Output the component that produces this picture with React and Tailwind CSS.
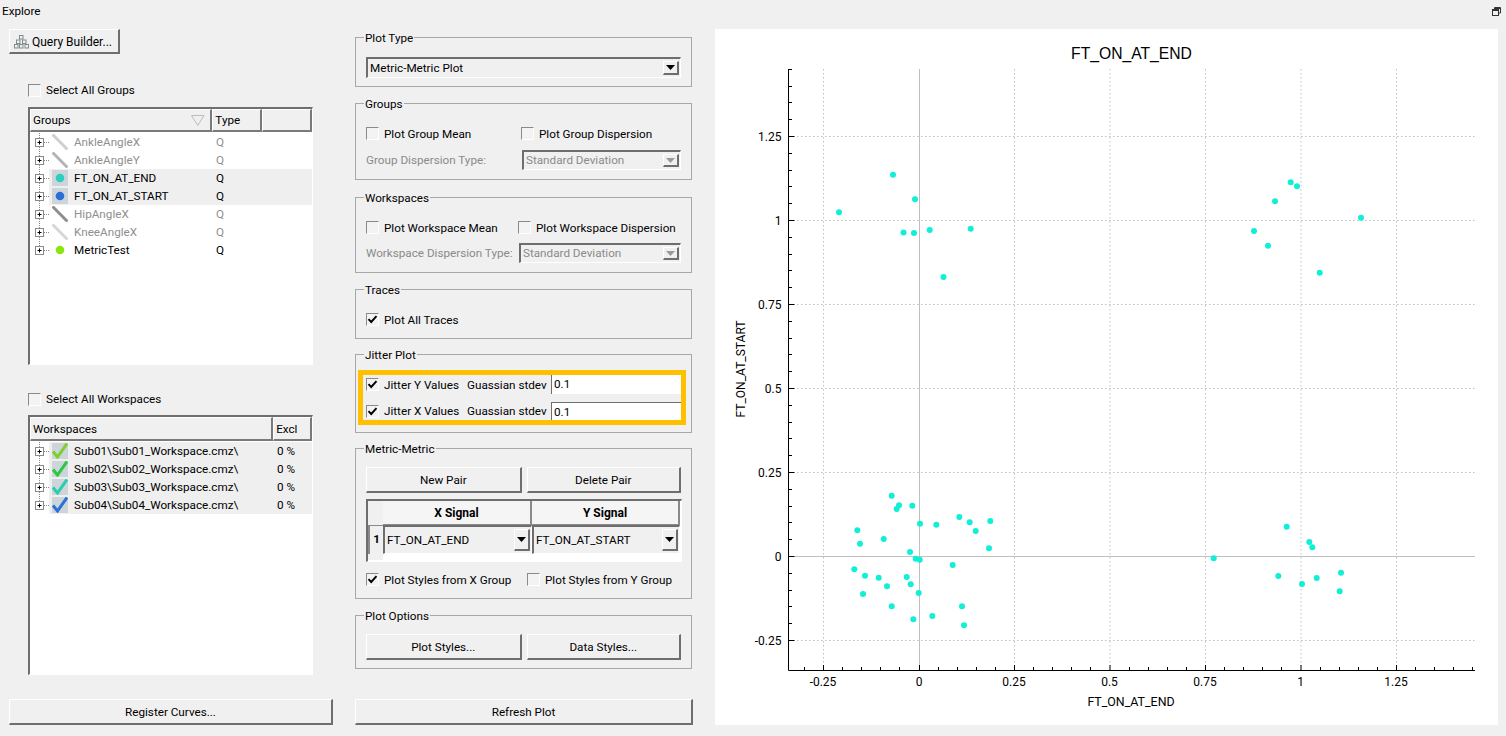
const raised = "border-t border-l border-r-2 border-b-2 border-t-white border-l-white border-r-[#6e6e6e] border-b-[#6e6e6e] bg-[#f0f0f0]";
const sunken = "border-t-2 border-l-2 border-r border-b border-t-[#6e6e6e] border-l-[#6e6e6e] border-r-white border-b-white";

function Check({ checked }) {
  return (
    <span className="w-[13px] h-[13px] shrink-0 border-t border-l border-r border-b border-t-[#8a8a8a] border-l-[#8a8a8a] border-r-white border-b-white bg-[#f3f3f3] flex items-center justify-center">
      {checked && (
        <svg width="11" height="11" viewBox="0 0 11 11">
          <path d="M1.5 5.2 L4.2 8 L9.5 2.2" fill="none" stroke="#000" strokeWidth="1.9" />
        </svg>
      )}
    </span>
  );
}

function CheckLabel({ checked, label, className = "" }) {
  return (
    <div className={"flex items-center gap-[5px] " + className}>
      <Check checked={checked} />
      <span className="whitespace-nowrap pt-[2px]">{label}</span>
    </div>
  );
}

function Btn({ children, className = "" }) {
  return (
    <div className={raised + " flex items-center justify-center pt-[2px] " + className}>{children}</div>
  );
}

function Arrow({ disabled }) {
  return (
    <svg width="9" height="5" viewBox="0 0 9 5">
      <path d="M0 0 H9 L4.5 5 Z" fill={disabled ? "#9a9a9a" : "#000"} />
    </svg>
  );
}

function Combo({ text, disabled, className = "" }) {
  return (
    <div className={sunken + " flex items-center justify-between pl-[2px] py-[2px] pr-[1px] bg-[#f0f0f0] " + (disabled ? "text-[#8a8a8a] " : "") + className}>
      <span className="whitespace-nowrap pt-[1px]">{text}</span>
      <div className={raised + " w-[16px] h-full flex items-center justify-center"}>
        <Arrow disabled={disabled} />
      </div>
    </div>
  );
}

function GroupBox({ title, className = "", children }) {
  return (
    <div className={"relative border border-[#a8a8a8] px-[10px] " + className}>
      <span className="absolute left-[8px] top-[-9px] h-[18px] leading-[18px] bg-[#f0f0f0] px-[1px]">{title}</span>
      {children}
    </div>
  );
}

function Expander({ last }) {
  return (
    <svg width="19" height="18" viewBox="0 0 19 18" className="shrink-0">
      <path d={last ? "M9.5 0 V9" : "M9.5 0 V18"} stroke="#8a8a8a" strokeDasharray="1 1" fill="none" />
      <path d="M14 9.5 H19" stroke="#8a8a8a" strokeDasharray="1 1" fill="none" />
      <rect x="5.5" y="5.5" width="8" height="8" fill="#fff" stroke="#8a8a8a" />
      <path d="M7.5 9.5 H11.5 M9.5 7.5 V11.5" stroke="#000" fill="none" />
    </svg>
  );
}

function Swatch({ kind, color }) {
  if (kind === "line") {
    return (
      <svg width="16" height="16" viewBox="0 0 16 16" className="shrink-0">
        <path d="M0.5 0.5 L15.5 15.5" stroke={color} strokeWidth="3" fill="none" />
      </svg>
    );
  }
  if (kind === "dot") {
    return (
      <svg width="16" height="16" viewBox="0 0 16 16" className="shrink-0">
        <rect width="16" height="16" fill="#cdd5da" />
        <circle cx="8" cy="8" r="4.3" fill={color} />
      </svg>
    );
  }
  if (kind === "plain") {
    return (
      <svg width="16" height="16" viewBox="0 0 16 16" className="shrink-0">
        <circle cx="8" cy="8" r="4.3" fill={color} />
      </svg>
    );
  }
  return (
    <svg width="16" height="16" viewBox="0 0 16 16" className="shrink-0">
      <rect width="16" height="16" fill="#cdd5da" />
      <path d="M1 8.5 L5.5 14 L15 0.5" stroke={color} strokeWidth="3" fill="none" />
    </svg>
  );
}

const groups = [
  { n: "AnkleAngleX", kind: "line", c: "#cfcfcf", dim: true },
  { n: "AnkleAngleY", kind: "line", c: "#b4b4b4", dim: true },
  { n: "FT_ON_AT_END", kind: "dot", c: "#2acfc0", hi: true },
  { n: "FT_ON_AT_START", kind: "dot", c: "#2b6fd6", hi: true },
  { n: "HipAngleX", kind: "line", c: "#8e8e8e", dim: true },
  { n: "KneeAngleX", kind: "line", c: "#d6d6d6", dim: true },
  { n: "MetricTest", kind: "plain", c: "#8be60f" },
];

const workspaces = [
  { n: "Sub01\\Sub01_Workspace.cmz\\", c: "#7fd02f" },
  { n: "Sub02\\Sub02_Workspace.cmz\\", c: "#2bc845" },
  { n: "Sub03\\Sub03_Workspace.cmz\\", c: "#2bcdb0" },
  { n: "Sub04\\Sub04_Workspace.cmz\\", c: "#2b72d6" },
];

function HeaderCell({ children, className = "" }) {
  return (
    <div className={"h-full border-t border-l border-r-2 border-b-2 border-t-white border-l-white border-r-[#7a7a7a] border-b-[#7a7a7a] flex items-center relative pl-[2px] pt-[2px] " + className}>
      {children}
    </div>
  );
}

function GroupsTable() {
  return (
    <div className={sunken + " ml-[19px] w-[285px] h-[258px] bg-white"}>
      <div className="h-[23px] flex bg-[#f0f0f0]">
        <HeaderCell className="w-[183px]">
          Groups
          <svg width="14" height="11" viewBox="0 0 14 11" className="absolute right-[5px] top-[5px]">
            <path d="M0.5 0.5 H13 L6.8 10.5 Z" fill="none" stroke="#bdbdbd" />
          </svg>
        </HeaderCell>
        <HeaderCell className="w-[50px]">Type</HeaderCell>
        <HeaderCell className="w-[50px]" />
      </div>
      <div className="pt-[1px]">
        {groups.map((g, i) => (
          <div key={g.n} className="h-[18px] flex">
            <div className="w-[19px] shrink-0"><Expander last={i === groups.length - 1} /></div>
            <div className={"flex-1 flex items-center pl-[3px] " + (g.hi ? "bg-[#efefef] " : "") + (g.dim ? "text-[#8f8f8f]" : "text-black")}>
              <Swatch kind={g.kind} color={g.c} />
              <span className="ml-[6px] w-[142px] whitespace-nowrap pt-[1px]">{g.n}</span>
              <span className="pt-[1px]">Q</span>
            </div>
          </div>
        ))}
      </div>
    </div>
  );
}

function WorkspacesTable() {
  return (
    <div className={sunken + " ml-[19px] w-[285px] h-[260px] bg-white"}>
      <div className="h-[24px] flex bg-[#f0f0f0]">
        <HeaderCell className="w-[244px]">Workspaces</HeaderCell>
        <HeaderCell className="w-[39px]">Excl</HeaderCell>
      </div>
      <div className="pt-[1px]">
        {workspaces.map((w, i) => (
          <div key={w.n} className="h-[18px] flex">
            <div className="w-[19px] shrink-0"><Expander last={i === workspaces.length - 1} /></div>
            <div className="flex-1 flex items-center pl-[3px] bg-[#efefef]">
              <Swatch kind="check" color={w.c} />
              <span className="ml-[6px] w-[203px] whitespace-nowrap pt-[1px]">{w.n}</span>
              <span className="pt-[1px]">0 %</span>
            </div>
          </div>
        ))}
      </div>
    </div>
  );
}

const points = [
  [891.7,495.7],[899,505.3],[896.7,509],[912.3,505.7],[920,523.7],[936.3,524.7],[959.3,517],[969.7,522.3],[990.3,521],[975.7,531],[989,548.3],[857.3,530.3],[860,543.7],[883.7,539],[910,552],[915.7,558.7],[919.7,559.7],[952.7,565],[854.3,569.3],[865,575.7],[878.7,577.7],[887,586.3],[863,594],[906.7,577],[910.7,584.3],[918.7,593],[891.7,606.3],[962,606.3],[932.3,616],[913.3,619.3],[964,625.3],
  [1290.7,182.3],[1297,186.3],[1275,201.3],[1361,217.7],[1254,231],[1268,245.7],[1319.7,272.7],
  [1286.7,526.7],[1309.3,542],[1312.3,547.3],[1213.7,558.3],[1278.3,576],[1341,572.7],[1316.7,578],[1302,584],[1339.7,591.3],
  [839,212.3],[893,174.7],[915,199.3],[903.5,232.5],[914,233],[929.7,230],[970.7,228.7],[943.5,277],
];

const xTicks = [["-0.25",823.5],["0",919.5],["0.25",1014.5],["0.5",1110],["0.75",1205.5],["1",1301],["1.25",1396.5]];
const yTicks = [["1.25",136.5],["1",220.5],["0.75",304.5],["0.5",388.5],["0.25",472.5],["0",556.5],["-0.25",640.5]];

function Chart() {
  const xMinor = [];
  for (let k = -1; k < 36; k++) {
    const x = 823.5 + k * 19.1;
    if (x >= 789 && x <= 1475 && k % 5 !== 0) xMinor.push(Math.round(x - 0.5) + 0.5);
  }
  const yMinor = [];
  for (let k = -4; k < 31; k++) {
    const y = 136.5 + k * 16.8;
    if (y >= 69 && y <= 670 && ((k % 5) + 5) % 5 !== 0) yMinor.push(Math.round(y - 0.5) + 0.5);
  }
  const font = "Roboto, sans-serif";
  return (
    <div className="ml-[22px] w-[783px] h-[696px] bg-white shrink-0">
      <svg width="783" height="696" viewBox="715 29 783 696" className="block">
        {xTicks.filter((t) => t[0] !== "0").map((t) => (
          <path key={t[0]} d={`M${t[1]} 69 V670`} stroke="#c0c0c0" strokeDasharray="1.5 2.5" fill="none" />
        ))}
        {yTicks.filter((t) => t[0] !== "0").map((t) => (
          <path key={t[0]} d={`M789 ${t[1]} H1475`} stroke="#c0c0c0" strokeDasharray="1.5 2.5" fill="none" />
        ))}
        <path d="M919.5 69 V670 M789 556.5 H1475" stroke="#c0c0c0" fill="none" />
        {points.map((p, i) => (
          <circle key={i} cx={p[0]} cy={p[1]} r="3" fill="#10efd8" />
        ))}
        <path d="M788.5 69 V670.5 H1475" stroke="#000" fill="none" />
        {yMinor.map((y) => <path key={y} d={`M789 ${y} H792`} stroke="#000" fill="none" />)}
        {xMinor.map((x) => <path key={x} d={`M${x} 670 V667`} stroke="#000" fill="none" />)}
        {yTicks.map((t) => <path key={t[0]} d={`M789 ${t[1]} H794.5`} stroke="#000" fill="none" />)}
        {xTicks.map((t) => <path key={t[0]} d={`M${t[1]} 670 V665`} stroke="#000" fill="none" />)}
        <g fontFamily={font} fontSize="12" fill="#000">
          {yTicks.map((t) => (
            <text key={t[0]} x="781.5" y={t[1] + 4.5} textAnchor="end">{t[0]}</text>
          ))}
          {xTicks.map((t) => (
            <text key={t[0]} x={t[1] - 0.5} y="685.5" textAnchor="middle">{t[0]}</text>
          ))}
          <text x="1131" y="706" textAnchor="middle" fontSize="12.4">FT_ON_AT_END</text>
          <text transform="translate(745 369) rotate(-90)" textAnchor="middle">FT_ON_AT_START</text>
        </g>
        <text x="1131.5" y="59" textAnchor="middle" fontFamily="'Liberation Sans', sans-serif" fontSize="15.7" fill="#000">FT_ON_AT_END</text>
      </svg>
    </div>
  );
}

export default function App() {
  return (
    <div className="w-[1506px] h-[736px] overflow-hidden bg-[#f0f0f0] text-black text-[11.7px] font-['Roboto','Liberation_Sans',sans-serif]">
      <div className="h-[22px] flex items-center justify-between pl-[2px] pr-[5px]">
        <span className="pt-[2px]">Explore</span>
        <svg width="9" height="9" viewBox="0 0 9 9">
          <path d="M2.5 2.5 V0.5 H8.5 V6 H6.5" fill="none" stroke="#333" />
          <rect x="0.5" y="2.5" width="6" height="6" fill="none" stroke="#333" />
          <path d="M0.5 3.5 H6.5 M2.5 1.5 H8.5" stroke="#333" fill="none" />
        </svg>
      </div>
      <div className="flex pl-[9px] pt-[7px]">
        {/* Left column */}
        <div className="w-[324px] shrink-0 flex flex-col">
          <Btn className="w-[111px] h-[25px] gap-[2px] !justify-start pl-[4px] text-[12px]">
            <svg width="16" height="14" viewBox="0 0 16 14" className="shrink-0">
              <g fill="none" stroke="#7f8c8d">
                <rect x="5.5" y="0.5" width="3.5" height="3.5" />
                <rect x="2.5" y="5" width="3.5" height="3.5" />
                <rect x="8.5" y="5" width="3.5" height="3.5" />
                <rect x="0.5" y="9.5" width="3.5" height="3.5" />
                <rect x="5.5" y="9.5" width="3.5" height="3.5" />
                <rect x="11" y="9.5" width="3.5" height="3.5" />
              </g>
            </svg>
            <span className="whitespace-nowrap">Query Builder...</span>
          </Btn>
          <CheckLabel label="Select All Groups" className="ml-[19px] mt-[27px] h-[18px]" />
          <div className="mt-[8px]"><GroupsTable /></div>
          <CheckLabel label="Select All Workspaces" className="ml-[19px] mt-[25px] h-[18px]" />
          <div className="mt-[7px]"><WorkspacesTable /></div>
          <Btn className="mt-[24px] w-[324px] h-[26px]">Register Curves...</Btn>
        </div>

        {/* Middle column */}
        <div className="ml-[22px] mt-[8px] w-[338px] shrink-0 flex flex-col">
          <GroupBox title="Plot Type" className="w-[337px] h-[50px] pt-[19px]">
            <Combo text="Metric-Metric Plot" className="w-[315px] h-[21px]" />
          </GroupBox>

          <GroupBox title="Groups" className="w-[337px] h-[77px] mt-[16px] pt-[23px]">
            <div className="flex h-[13px]">
              <CheckLabel label="Plot Group Mean" className="w-[155px]" />
              <CheckLabel label="Plot Group Dispersion" />
            </div>
            <div className="flex items-center mt-[10px]">
              <span className="w-[156px] text-[#8a8a8a] whitespace-nowrap pt-[1px]">Group Dispersion Type:</span>
              <Combo text="Standard Deviation" disabled className="w-[159px] h-[20px]" />
            </div>
          </GroupBox>

          <GroupBox title="Workspaces" className="w-[337px] h-[76px] mt-[17px] pt-[23px]">
            <div className="flex h-[13px]">
              <CheckLabel label="Plot Workspace Mean" className="w-[152px]" />
              <CheckLabel label="Plot Workspace Dispersion" />
            </div>
            <div className="flex items-center mt-[9px]">
              <span className="w-[153px] text-[#8a8a8a] whitespace-nowrap pt-[1px]">Workspace Dispersion Type:</span>
              <Combo text="Standard Deviation" disabled className="w-[162px] h-[20px]" />
            </div>
          </GroupBox>

          <GroupBox title="Traces" className="w-[337px] h-[50px] mt-[16px] pt-[23px]">
            <CheckLabel checked label="Plot All Traces" className="h-[13px]" />
          </GroupBox>

          <GroupBox title="Jitter Plot" className="w-[337px] h-[79px] mt-[15px] !px-[2px] pt-[15px]">
            <div className="w-[328px] h-[55px] border-[5px] border-[#ffc000] pl-[3px] flex flex-col">
              <div className="flex items-center h-[19px]">
                <CheckLabel checked label="Jitter Y Values" className="w-[101px]" />
                <span className="w-[84px] whitespace-nowrap pt-[2px]">Guassian stdev</span>
                <div className="flex-1 h-full border-l border-[#6e6e6e] bg-white pl-[2px] pt-[1px] flex items-center">0.1</div>
              </div>
              <div className="flex items-center h-[18px] mt-[8px]">
                <CheckLabel checked label="Jitter X Values" className="w-[101px]" />
                <span className="w-[84px] whitespace-nowrap pt-[2px]">Guassian stdev</span>
                <div className="flex-1 h-full border-t border-l border-[#6e6e6e] bg-white pl-[2px] pt-[2px] flex items-center">0.1</div>
              </div>
            </div>
          </GroupBox>

          <GroupBox title="Metric-Metric" className="w-[337px] h-[151px] mt-[15px] pt-[18px]">
            <div className="flex gap-[5px]">
              <Btn className="w-[156px] h-[26px]">New Pair</Btn>
              <Btn className="w-[155px] h-[26px]">Delete Pair</Btn>
            </div>
            <div className={sunken + " mt-[6px] w-[316px] h-[63px] bg-white"}>
              <div className="flex h-[24px] font-bold text-[12px]">
                <div className="w-[15px] bg-[#f0f0f0]" />
                <div className="w-[149px] bg-[#f5f5f5] border-r-2 border-b border-[#8a8a8a] pt-[1px] flex items-center justify-center">X Signal</div>
                <div className="w-[148px] bg-[#f5f5f5] border-r-2 border-b border-[#8a8a8a] pt-[1px] flex items-center justify-center">Y Signal</div>
              </div>
              <div className="flex h-[29px]">
                <div className="w-[15px] bg-[#f0f0f0] border-l-2 border-t border-[#8a8a8a] flex items-center justify-center font-bold">1</div>
                <Combo text="FT_ON_AT_END" className="w-[149px] h-full" />
                <Combo text="FT_ON_AT_START" className="w-[148px] h-full" />
              </div>
              <div className="w-[15px] h-[6px] bg-[#f0f0f0]" />
            </div>
            <div className="flex mt-[11px] h-[13px]">
              <CheckLabel checked label="Plot Styles from X Group" className="w-[161px]" />
              <CheckLabel label="Plot Styles from Y Group" />
            </div>
          </GroupBox>

          <GroupBox title="Plot Options" className="w-[337px] h-[54px] mt-[16px] pt-[18px]">
            <div className="flex gap-[5px]">
              <Btn className="w-[156px] h-[26px]">Plot Styles...</Btn>
              <Btn className="w-[155px] h-[26px]">Data Styles...</Btn>
            </div>
          </GroupBox>

          <Btn className="mt-[30px] w-[338px] h-[26px]">Refresh Plot</Btn>
        </div>

        <Chart />
      </div>
    </div>
  );
}
